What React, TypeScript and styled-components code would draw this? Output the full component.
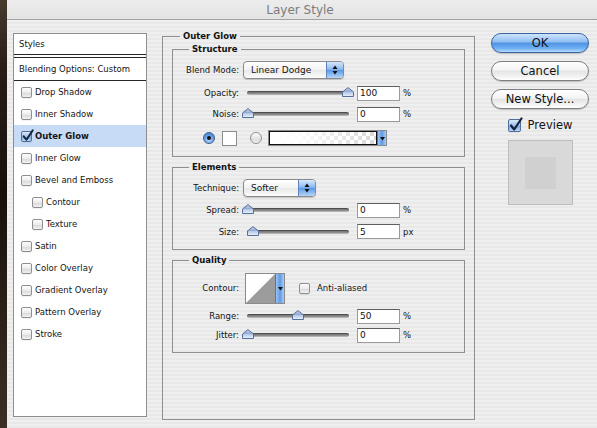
import React from "react";
import styled, { createGlobalStyle } from "styled-components";

const stripes =
  "repeating-linear-gradient(to bottom, #efefef 0px, #efefef 2px, #e8e8e8 2px, #e8e8e8 4px)";

const GlobalStyle = createGlobalStyle`
  html, body { margin: 0; padding: 0; }
  body {
    background: #ececec;
    font-family: "DejaVu Sans", "Liberation Sans", sans-serif;
    font-size: 8.5px;
    color: #141414;
  }
`;

const Screen = styled.div`
  width: 597px;
  height: 428px;
  display: flex;
  overflow: hidden;
`;

const DesktopEdge = styled.div`
  width: 7px;
  flex-shrink: 0;
  background: linear-gradient(
    to bottom,
    #4b3b2f 0%,
    #2a1e17 15%,
    #171009 45%,
    #2d2119 75%,
    #3d2f25 100%
  );
`;

const Window = styled.div`
  flex: 1;
  display: flex;
  flex-direction: column;
  background: ${stripes};
`;

const TitleBar = styled.div`
  height: 19px;
  border-bottom: 1px solid #a2a2a2;
  display: flex;
  align-items: center;
  justify-content: center;
  padding-right: 4px;
  font-size: 12px;
  color: #7c7c7c;
  background: linear-gradient(#ededed, #e3e3e3);
`;

const Content = styled.div`
  display: flex;
  align-items: flex-start;
  padding: 10px 0 0 6px;
`;

/* ---------- left list ---------- */

const StyleList = styled.div`
  width: 134px;
  height: 384px;
  margin-top: 3px;
  box-sizing: border-box;
  border: 1px solid #8e8e8e;
  background: #fff;
  flex-shrink: 0;
`;

const ListHeader = styled.div`
  height: 20px;
  border-bottom: 4px double #262626;
  padding-left: 5px;
  display: flex;
  align-items: center;
`;

const BlendRow = styled.div`
  height: 22px;
  border-bottom: 1px solid #262626;
  padding-left: 5px;
  display: flex;
  align-items: center;
`;

const ListItem = styled.div<{ $sub?: boolean; $selected?: boolean }>`
  height: 22px;
  display: flex;
  align-items: center;
  gap: 3px;
  padding-left: ${(p) => (p.$sub ? 18 : 7)}px;
  background: ${(p) => (p.$selected ? "#c8dbf6" : "transparent")};
  font-weight: ${(p) => (p.$selected ? "bold" : "normal")};
`;

const CheckBox = styled.span<{ $size: number; $checked?: boolean }>`
  position: relative;
  display: inline-block;
  flex-shrink: 0;
  width: ${(p) => p.$size}px;
  height: ${(p) => p.$size}px;
  box-sizing: border-box;
  border: 1px solid ${(p) => (p.$checked ? "#4f6f9c" : "#8f8f8f")};
  border-radius: 2px;
  background: ${(p) =>
    p.$checked
      ? "linear-gradient(#dbe8f8, #9dbde6 55%, #7ea8de 56%, #bcd6f3)"
      : "linear-gradient(#fefefe, #e9e9e9 55%, #dadada 56%, #f1f1f1)"};
  box-shadow: 0 1px 0 rgba(0, 0, 0, 0.06);
`;

const CheckMark = styled.svg`
  position: absolute;
  left: 0;
  top: -3px;
`;

const Check: React.FC<{ size: number; checked?: boolean }> = ({ size, checked }) => (
  <CheckBox $size={size} $checked={checked}>
    {checked && (
      <CheckMark width={size + 1} height={size + 2} viewBox="0 0 14 15">
        <path
          d="M2 8.5 L5.2 12.5 L12.5 1.5"
          fill="none"
          stroke="#15233d"
          strokeWidth="2.2"
          strokeLinecap="round"
          strokeLinejoin="round"
        />
      </CheckMark>
    )}
  </CheckBox>
);

/* ---------- group boxes ---------- */

const OuterGroup = styled.fieldset`
  margin: 0 0 0 15px;
  padding: 0 9px;
  width: 313px;
  height: 390px;
  box-sizing: border-box;
  border: 1px solid #8f8f8f;
  min-width: 0;
  flex-shrink: 0;
`;

const Legend = styled.legend<{ $inset: number }>`
  font-weight: bold;
  font-size: 8.5px;
  line-height: 12px;
  padding: 0 3px;
  margin-left: ${(p) => p.$inset}px;
  color: #111;
`;

const Group = styled.fieldset<{ $top: number; $pad: string }>`
  margin: ${(p) => p.$top}px 0 0 0;
  padding: ${(p) => p.$pad};
  border: 1px solid #8f8f8f;
  min-width: 0;
`;

const Row = styled.div<{ $h: number }>`
  height: ${(p) => p.$h}px;
  display: flex;
  align-items: center;
`;

const Label = styled.span`
  width: 66px;
  flex-shrink: 0;
  text-align: right;
  margin-right: 4px;
  white-space: nowrap;
`;

const Unit = styled.span`
  margin-left: 3px;
`;

/* popup menu */

const Popup = styled.div<{ $w: number }>`
  width: ${(p) => p.$w}px;
  height: 18px;
  box-sizing: border-box;
  border: 1px solid #8a8a8a;
  border-radius: 4px;
  background: linear-gradient(#ffffff, #f2f2f2 50%, #e8e8e8 51%, #fbfbfb);
  box-shadow: 0 1px 1px rgba(0, 0, 0, 0.18);
  display: flex;
  overflow: hidden;
`;

const PopupText = styled.span`
  flex: 1;
  display: flex;
  align-items: center;
  padding-left: 7px;
  font-size: 9px;
`;

const PopupArrows = styled.span`
  width: 16px;
  border-left: 1px solid #5d86c0;
  background: linear-gradient(#d6e7fb, #8dbaf0 45%, #5d9ae6 52%, #b6d6f8);
  display: flex;
  align-items: center;
  justify-content: center;
`;

const PopupMenu: React.FC<{ width: number; value: string }> = ({ width, value }) => (
  <Popup $w={width}>
    <PopupText>{value}</PopupText>
    <PopupArrows>
      <svg width="6" height="10" viewBox="0 0 6 10">
        <path d="M3 0.5 L5.5 4 H0.5 Z" fill="#111" />
        <path d="M3 9.5 L5.5 6 H0.5 Z" fill="#111" />
      </svg>
    </PopupArrows>
  </Popup>
);

/* slider */

const SliderBox = styled.div`
  position: relative;
  width: 110px;
  height: 14px;
  flex-shrink: 0;
`;

const Track = styled.div`
  position: absolute;
  left: 4px;
  right: 4px;
  top: 5px;
  height: 4px;
  border-radius: 2px;
  background: linear-gradient(#5f5f5f, #8a8a8a 60%, #c4c4c4);
  box-shadow: inset 0 1px 0 rgba(0, 0, 0, 0.25);
`;

const Thumb = styled.svg`
  position: absolute;
  top: 1px;
`;

const Slider: React.FC<{ pct: number; id: string }> = ({ pct, id }) => (
  <SliderBox>
    <Track />
    <Thumb width="12" height="10" viewBox="0 0 12 10" style={{ left: pct - 1 }}>
      <defs>
        <linearGradient id={id} x1="0" y1="0" x2="0" y2="1">
          <stop offset="0" stopColor="#c9d6ec" />
          <stop offset="0.5" stopColor="#8fa6cf" />
          <stop offset="0.55" stopColor="#b7caea" />
          <stop offset="1" stopColor="#eef3fb" />
        </linearGradient>
      </defs>
      <path d="M0.5 9.5 V5 L6 0.6 L11.5 5 V9.5 Z" fill={`url(#${id})`} stroke="#56709d" />
    </Thumb>
  </SliderBox>
);

const NumberField = styled.input`
  width: 43px;
  height: 15px;
  box-sizing: border-box;
  margin: 0 0 0 4px;
  padding: 0 0 0 2px;
  border: 1px solid #9a9a9a;
  border-top-color: #5e5e5e;
  background: #fff;
  font-family: "DejaVu Sans", sans-serif;
  font-size: 9px;
  color: #111;
  outline: none;
`;

const SliderRow: React.FC<{ h: number; label: string; pct: number; value: string; unit: string; id: string }> = ({
  h,
  label,
  pct,
  value,
  unit,
  id,
}) => (
  <Row $h={h}>
    <Label>{label}</Label>
    <Slider pct={pct} id={id} />
    <NumberField readOnly value={value} />
    <Unit>{unit}</Unit>
  </Row>
);

/* colour row */

const Radio = styled.span<{ $on?: boolean; $gap: number }>`
  width: 12px;
  height: 12px;
  margin-left: ${(p) => p.$gap}px;
  flex-shrink: 0;
  box-sizing: border-box;
  border-radius: 50%;
  border: 1px solid ${(p) => (p.$on ? "#3b5f95" : "#8f8f8f")};
  background: ${(p) =>
    p.$on
      ? "radial-gradient(circle at 50% 70%, #bcd8f8, #5b95e0 60%, #3d74c4)"
      : "linear-gradient(#fdfdfd, #e4e4e4 55%, #d8d8d8 56%, #f4f4f4)"};
  display: flex;
  align-items: center;
  justify-content: center;
  &::after {
    content: "";
    display: ${(p) => (p.$on ? "block" : "none")};
    width: 4px;
    height: 4px;
    border-radius: 50%;
    background: #111;
  }
`;

const ColorSwatch = styled.span`
  width: 15px;
  height: 15px;
  margin-left: 7px;
  box-sizing: border-box;
  border: 1px solid #8c8c8c;
  background: #fff;
`;

const GradientPicker = styled.div`
  margin-left: 6px;
  width: 119px;
  height: 16px;
  display: flex;
  box-sizing: border-box;
  border: 1px solid #8a8a8a;
`;

const GradientBar = styled.span`
  flex: 1;
  border: 1px solid #111;
  background: linear-gradient(to right, #fff 0%, rgba(255, 255, 255, 0.95) 25%, rgba(255, 255, 255, 0) 100%),
    repeating-conic-gradient(#d8d8d8 0% 25%, #ffffff 0% 50%) 0 0 / 8px 8px;
`;

const DropStrip = styled.span`
  width: 8px;
  background: linear-gradient(to right, #9cc4f2, #5f9be6 50%, #a9cdf5);
  border-left: 1px solid #4f78b3;
  display: flex;
  align-items: center;
  justify-content: center;
`;

const DownArrow = () => (
  <svg width="5" height="5" viewBox="0 0 5 5">
    <path d="M0 1 H5 L2.5 4.5 Z" fill="#111" />
  </svg>
);

/* contour */

const ContourPicker = styled.div`
  margin-left: 2px;
  width: 40px;
  height: 31px;
  box-sizing: border-box;
  border: 1px solid #8a8a8a;
  display: flex;
  background: #fff;
`;

const ContourCurve = styled.svg`
  flex: 1;
  display: block;
`;

const AntiAlias = styled.label`
  display: flex;
  align-items: center;
  gap: 7px;
  margin-left: 14px;
`;

/* right column */

const ButtonColumn = styled.div`
  width: 98px;
  margin: 3px 0 0 16px;
  display: flex;
  flex-direction: column;
  align-items: stretch;
  gap: 8px;
  flex-shrink: 0;
`;

const AquaButton = styled.div<{ $default?: boolean }>`
  height: 20px;
  box-sizing: border-box;
  border-radius: 10px;
  border: 1px solid ${(p) => (p.$default ? "#3a64a0" : "#7e7e7e")};
  background: ${(p) =>
    p.$default
      ? "linear-gradient(#cfe3fb 0%, #8dbdf2 45%, #4f93e4 50%, #6eb0f2 80%, #b9dcfb 100%)"
      : "linear-gradient(#ffffff 0%, #f4f4f4 45%, #e4e4e4 50%, #f2f2f2 80%, #ffffff 100%)"};
  box-shadow: 0 1px 1px rgba(0, 0, 0, 0.2);
  display: flex;
  align-items: center;
  justify-content: center;
  font-size: 11.5px;
  color: #111;
`;

const PreviewToggle = styled.div`
  margin-top: 1px;
  display: flex;
  align-items: center;
  justify-content: center;
  gap: 7px;
  font-size: 11.5px;
`;

const PreviewSwatch = styled.div`
  align-self: center;
  width: 65px;
  height: 65px;
  box-sizing: border-box;
  border: 1px solid #bdbdbd;
  background: #d9d9d9;
  display: flex;
  align-items: center;
  justify-content: center;
`;

const PreviewInner = styled.div`
  width: 31px;
  height: 32px;
  background: #d0d0d0;
`;

const styleItems = [
  { label: "Drop Shadow" },
  { label: "Inner Shadow" },
  { label: "Outer Glow", checked: true },
  { label: "Inner Glow" },
  { label: "Bevel and Emboss" },
  { label: "Contour", sub: true },
  { label: "Texture", sub: true },
  { label: "Satin" },
  { label: "Color Overlay" },
  { label: "Gradient Overlay" },
  { label: "Pattern Overlay" },
  { label: "Stroke" },
];

const App: React.FC = () => {
  return (
    <Screen>
      <GlobalStyle />
      <DesktopEdge />
      <Window>
        <TitleBar>Layer Style</TitleBar>
        <Content>
          <StyleList>
            <ListHeader>Styles</ListHeader>
            <BlendRow>Blending Options: Custom</BlendRow>
            {styleItems.map((item) => (
              <ListItem key={item.label} $sub={item.sub} $selected={item.checked}>
                <Check size={11} checked={item.checked} />
                {item.label}
              </ListItem>
            ))}
          </StyleList>

          <OuterGroup>
            <Legend $inset={8}>Outer Glow</Legend>

            <Group $top={1} $pad="3px 0 4px 0">
              <Legend $inset={16}>Structure</Legend>
              <Row $h={24}>
                <Label>Blend Mode:</Label>
                <PopupMenu width={101} value="Linear Dodge" />
              </Row>
              <SliderRow h={22} label="Opacity:" pct={100} value="100" unit="%" id="t-op" />
              <SliderRow h={20} label="Noise:" pct={0} value="0" unit="%" id="t-noise" />
              <Row $h={28}>
                <Radio $on $gap={30} />
                <ColorSwatch />
                <Radio $gap={13} />
                <GradientPicker>
                  <GradientBar />
                  <DropStrip>
                    <DownArrow />
                  </DropStrip>
                </GradientPicker>
              </Row>
            </Group>

            <Group $top={4} $pad="4px 0 7px 0">
              <Legend $inset={16}>Elements</Legend>
              <Row $h={22}>
                <Label>Technique:</Label>
                <PopupMenu width={73} value="Softer" />
              </Row>
              <SliderRow h={22} label="Spread:" pct={0} value="0" unit="%" id="t-spread" />
              <SliderRow h={21} label="Size:" pct={5} value="5" unit="px" id="t-size" />
            </Group>

            <Group $top={4} $pad="5px 0 9px 0">
              <Legend $inset={16}>Quality</Legend>
              <Row $h={34}>
                <Label>Contour:</Label>
                <ContourPicker>
                  <ContourCurve viewBox="0 0 30 29" preserveAspectRatio="none">
                    <path d="M0 29 L30 0 V29 Z" fill="#9c9c9c" />
                  </ContourCurve>
                  <DropStrip>
                    <DownArrow />
                  </DropStrip>
                </ContourPicker>
                <AntiAlias>
                  <Check size={11} />
                  Anti-aliased
                </AntiAlias>
              </Row>
              <SliderRow h={22} label="Range:" pct={50} value="50" unit="%" id="t-range" />
              <SliderRow h={16} label="Jitter:" pct={0} value="0" unit="%" id="t-jitter" />
            </Group>
          </OuterGroup>

          <ButtonColumn>
            <AquaButton $default>OK</AquaButton>
            <AquaButton>Cancel</AquaButton>
            <AquaButton>New Style...</AquaButton>
            <PreviewToggle>
              <Check size={13} checked />
              Preview
            </PreviewToggle>
            <PreviewSwatch>
              <PreviewInner />
            </PreviewSwatch>
          </ButtonColumn>
        </Content>
      </Window>
    </Screen>
  );
};

export default App;
